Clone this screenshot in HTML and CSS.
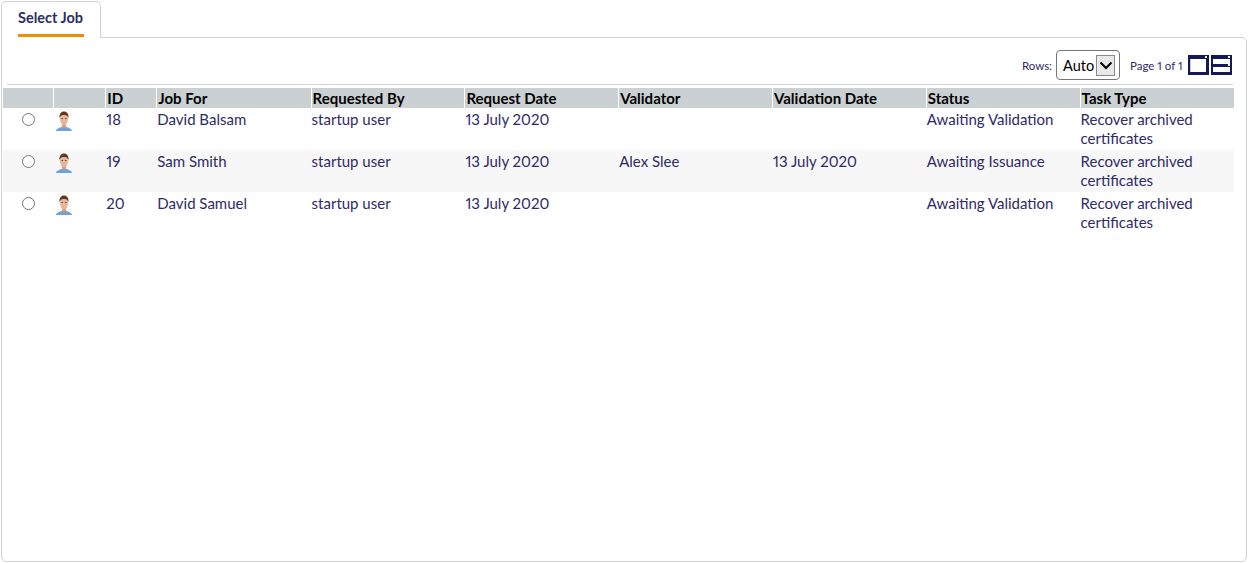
FILE: index.html
```html
<!DOCTYPE html>
<html lang="en">
<head>
<meta charset="utf-8">
<title>Select Job</title>
<link rel="stylesheet" href="styles.css">
</head>
<body>
<div class="tabs"><div class="tab"><span class="tab-label">Select Job</span></div></div>
<main class="panel">
  <div class="toolbar">
    <span class="rows-label">Rows:</span>
    <div class="rows-box"><span class="rows-value">Auto</span><span class="rows-arrow"><svg width="16" height="20" viewBox="0 0 16 20"><path d="M2.500 7.500L8 13L13.500 7.500" fill="none" stroke="#000" stroke-width="2"/></svg></span></div>
    <span class="pager">Page 1 of 1</span>
    <svg class="view" width="21" height="20" viewBox="0 0 21 20"><path fill-rule="evenodd" d="M0 0H21V20H0ZM2 4V17H18V4Z" fill="#14195a"/><rect x="2" y="4" width="1" height="13" fill="#c9cbdc"/><rect x="17" y="1" width="2" height="2" fill="#fff"/></svg>
    <svg class="view" width="21" height="20" viewBox="0 0 21 20"><path fill-rule="evenodd" d="M0 0H21V20H0ZM2 4V9H19V4ZM2 12V17H19V12Z" fill="#14195a"/><rect x="17" y="1" width="2" height="2" fill="#fff"/><rect x="17" y="9" width="2" height="2" fill="#fff"/></svg>
  </div>
  <div class="rule"></div>
  <table class="grid">
    <colgroup><col class="c1"><col class="c2"><col class="c3"><col class="c4"><col class="c5"><col class="c5"><col class="c5"><col class="c5"><col class="c5"><col class="c6"></colgroup>
    <thead><tr><th></th><th></th><th>ID</th><th>Job For</th><th>Requested By</th><th>Request Date</th><th>Validator</th><th>Validation Date</th><th>Status</th><th>Task Type</th></tr></thead>
    <tbody>
      <tr><td class="sel"><span class="radio"></span></td><td><svg class="avatar" width="16" height="20" viewBox="0 0 16 20"><path d="M0 20C0 18 3 17 5 16H11C13 17 16 18 16 20Z" fill="#6fa3d8"/><rect x="6" y="13" width="4" height="4" fill="#d39a78"/><ellipse cx="8" cy="8" rx="4" ry="6.500" fill="#e8b598"/><path d="M3.500 7C3 2 6 .5 8 .5S13 2 12.500 7C11.500 4.500 10 4 8 4S4.500 4.500 3.500 7Z" fill="#5b3a25"/><path d="M5.500 7.500H7M9 7.500H10.500" stroke="#6b4630"/></svg></td><td>18</td><td>David Balsam</td><td>startup user</td><td>13 July 2020</td><td></td><td></td><td>Awaiting Validation</td><td>Recover archived certificates</td></tr>
      <tr class="alt"><td class="sel"><span class="radio"></span></td><td><svg class="avatar" width="16" height="20" viewBox="0 0 16 20"><path d="M0 20C0 18 3 17 5 16H11C13 17 16 18 16 20Z" fill="#6fa3d8"/><rect x="6" y="13" width="4" height="4" fill="#d39a78"/><ellipse cx="8" cy="8" rx="4" ry="6.500" fill="#e8b598"/><path d="M3.500 7C3 2 6 .5 8 .5S13 2 12.500 7C11.500 4.500 10 4 8 4S4.500 4.500 3.500 7Z" fill="#5b3a25"/><path d="M5.500 7.500H7M9 7.500H10.500" stroke="#6b4630"/></svg></td><td>19</td><td>Sam Smith</td><td>startup user</td><td>13 July 2020</td><td>Alex Slee</td><td>13 July 2020</td><td>Awaiting Issuance</td><td>Recover archived certificates</td></tr>
      <tr><td class="sel"><span class="radio"></span></td><td><svg class="avatar" width="16" height="20" viewBox="0 0 16 20"><path d="M0 20C0 18 3 17 5 16H11C13 17 16 18 16 20Z" fill="#6fa3d8"/><rect x="6" y="13" width="4" height="4" fill="#d39a78"/><ellipse cx="8" cy="8" rx="4" ry="6.500" fill="#e8b598"/><path d="M3.500 7C3 2 6 .5 8 .5S13 2 12.500 7C11.500 4.500 10 4 8 4S4.500 4.500 3.500 7Z" fill="#5b3a25"/><path d="M5.500 7.500H7M9 7.500H10.500" stroke="#6b4630"/></svg></td><td>20</td><td>David Samuel</td><td>startup user</td><td>13 July 2020</td><td></td><td></td><td>Awaiting Validation</td><td>Recover archived certificates</td></tr>
    </tbody>
  </table>
</main>
</body>
</html>
```
FILE: styles.css
```css
* { box-sizing: border-box; }
html, body { margin: 0; height: 100%; background: #fff; overflow: hidden; }
body { padding: 1px; font-family: Lato, sans-serif; font-size: 15px; font-variant-numeric: proportional-nums; color: #2f2a68; display: flex; flex-direction: column; height: 563px; }
.tabs { display: flex; height: 37px; position: relative; z-index: 1; }
.tab { width: 100px; height: 37px; border: 1px solid #d0d4d6; border-bottom: 0; border-radius: 5px 5px 0 0; background: #fff; padding: 0 0 0 16px; }
.tab-label { display: block; width: 66px; height: 35px; border-bottom: 3px solid #f28c00; font-weight: 700; font-size: 14.500px; line-height: 32px; white-space: nowrap; color: #2d2c66; }
.panel { flex: 1; border: 1px solid #d0d4d6; border-radius: 0 5px 5px 5px; margin-top: -1px; padding: 0 0 0 1px; }
.toolbar { height: 46px; display: flex; align-items: center; justify-content: flex-end; padding: 8px 12px 0 0; font-size: 11.500px; }
.rows-label { margin-right: 4px; }
.rows-box { width: 64px; height: 30px; border: 1px solid #767676; border-radius: 4px; display: flex; align-items: center; padding-left: 6px; color: #000; font-size: 14.500px; }
.rows-value { width: 33px; }
.rows-arrow { width: 19px; height: 21px; background: #e9e9e9; border: 1px solid #8a8a8a; display: flex; align-items: center; justify-content: center; }
.pager { margin-left: 10px; margin-right: 4px; width: 54px; white-space: nowrap; }
.view { display: block; margin-right: 2px; }
.rule { height: 1px; background: #d0d4d6; margin: 0 13px 0 4px; }
.grid { border-collapse: separate; border-spacing: 0; table-layout: fixed; width: 1231px; margin-top: 3px; }
.c1 { width: 50px; } .c2 { width: 52px; } .c3 { width: 51px; } .c4 { width: 154px; } .c5 { width: 153.500px; } .c6 { width: 154px; }
.grid th { background: #cbd0d2; color: #000; font-weight: 700; font-size: 15px; text-align: left; height: 20px; padding: 0 0 0 1px; border-left: 1px solid #fff; line-height: 20px; white-space: nowrap; }
.grid th:first-child { border-left: 0; }
.grid td { height: 42px; vertical-align: top; padding: 2px 10px 0 1px; font-size: 15px; line-height: 19px; }
.grid tr.alt td { background: #f7f7f7; }
.grid td.sel { padding: 5px 0 0 19px; }
.radio { display: block; width: 13px; height: 13px; border: 1px solid #767676; border-radius: 50%; background: #fff; }
.avatar { display: block; margin: 1px 0 0 2px; }
```
